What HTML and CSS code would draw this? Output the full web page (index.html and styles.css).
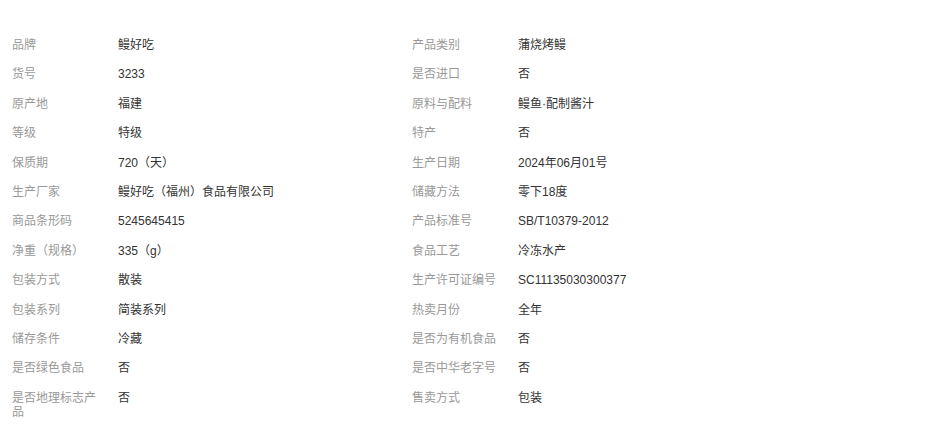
FILE: index.html
```html
<!DOCTYPE html>
<html lang="zh-CN">
<head>
  <meta charset="UTF-8">
  <title>商品参数</title>
  <link rel="stylesheet" href="styles.css">
</head>
<body>
  <ul class="attr-list">
    <li><span class="attr-name">品牌</span><span class="attr-value">鳗好吃</span></li>
    <li><span class="attr-name">产品类别</span><span class="attr-value">蒲烧烤鳗</span></li>
    <li><span class="attr-name">货号</span><span class="attr-value">3233</span></li>
    <li><span class="attr-name">是否进口</span><span class="attr-value">否</span></li>
    <li><span class="attr-name">原产地</span><span class="attr-value">福建</span></li>
    <li><span class="attr-name">原料与配料</span><span class="attr-value">鳗鱼·配制酱汁</span></li>
    <li><span class="attr-name">等级</span><span class="attr-value">特级</span></li>
    <li><span class="attr-name">特产</span><span class="attr-value">否</span></li>
    <li><span class="attr-name">保质期</span><span class="attr-value">720（天）</span></li>
    <li><span class="attr-name">生产日期</span><span class="attr-value">2024年06月01号</span></li>
    <li><span class="attr-name">生产厂家</span><span class="attr-value">鳗好吃（福州）食品有限公司</span></li>
    <li><span class="attr-name">储藏方法</span><span class="attr-value">零下18度</span></li>
    <li><span class="attr-name">商品条形码</span><span class="attr-value">5245645415</span></li>
    <li><span class="attr-name">产品标准号</span><span class="attr-value">SB/T10379-2012</span></li>
    <li><span class="attr-name">净重（规格）</span><span class="attr-value">335（g）</span></li>
    <li><span class="attr-name">食品工艺</span><span class="attr-value">冷冻水产</span></li>
    <li><span class="attr-name">包装方式</span><span class="attr-value">散装</span></li>
    <li><span class="attr-name">生产许可证编号</span><span class="attr-value">SC11135030300377</span></li>
    <li><span class="attr-name">包装系列</span><span class="attr-value">简装系列</span></li>
    <li><span class="attr-name">热卖月份</span><span class="attr-value">全年</span></li>
    <li><span class="attr-name">储存条件</span><span class="attr-value">冷藏</span></li>
    <li><span class="attr-name">是否为有机食品</span><span class="attr-value">否</span></li>
    <li><span class="attr-name">是否绿色食品</span><span class="attr-value">否</span></li>
    <li><span class="attr-name">是否中华老字号</span><span class="attr-value">否</span></li>
    <li><span class="attr-name">是否地理标志产品</span><span class="attr-value">否</span></li>
    <li><span class="attr-name">售卖方式</span><span class="attr-value">包装</span></li>
  </ul>
</body>
</html>
```
FILE: styles.css
```css
body {
    margin: 0;
    background: #fff;
    font-family: "Liberation Sans", "Noto Sans CJK SC", sans-serif;
    font-size: 12px;
}

.attr-list {
    list-style: none;
    margin: 0;
    padding: 38px 0 0 12px;
    display: grid;
    grid-template-columns: 400px 400px;
    row-gap: 15.42px;
}

.attr-list li {
    display: flex;
    line-height: 14px;
}

.attr-name {
    flex: 0 0 90px;
    padding-right: 16px;
    color: #999;
}

.attr-value {
    color: #333;
}
```
